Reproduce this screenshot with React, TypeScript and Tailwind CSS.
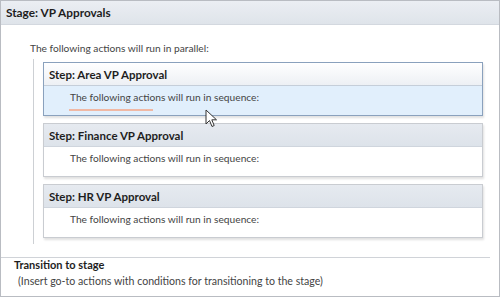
import React from 'react';

const font = { fontFamily: '"Lato", "Noto Sans", sans-serif' };

interface StepProps {
    title: string;
    selected?: boolean;
    underline?: boolean;
    children?: React.ReactNode;
}

function StepBox({ title, selected = false, underline = false, children }: StepProps) {
    return (
        <div
            className={`relative border shadow-[1px_2px_2px_rgba(0,0,0,0.12)] ${selected ? 'z-10 border-[#8aa1bd] bg-[#e1effc]' : 'border-[#c9ccd1] bg-white'}`}
        >
            <div
                className={`h-[23px] flex items-center pl-[5px] text-[11.5px] font-bold text-[#1e1e1e] border-b ${selected ? 'bg-gradient-to-b from-white to-[#edf0f4] border-[#c5ced9]' : 'bg-gradient-to-b from-[#e6eaf0] to-[#dde3ea] border-[#cfd5dd]'}`}
            >
                {title}
            </div>
            <div className="h-[29px] pl-[26px] pt-[4px] text-[10.2px] text-[#444]">
                The following actions will run in sequence:
                {underline && <div className="mt-[3px] ml-[-1px] h-[2px] w-[84px] bg-[#f0b8a4]" />}
            </div>
            {children}
        </div>
    );
}

function Cursor() {
    return (
        <svg className="absolute left-[161px] top-[46px]" width="13" height="19" viewBox="0 0 13 19">
            <path d="M1 1 L1 15 L4.5 11.5 L7 17.5 L9.2 16.5 L6.8 10.8 L11.5 10.8 Z" fill="#fff" stroke="#333" strokeWidth="1" strokeLinejoin="round" />
        </svg>
    );
}

export default function App() {
    return (
        <div className="w-[500px] h-[297px] overflow-hidden bg-white border border-[#b9bcc2] flex flex-col" style={font}>
            <div className="h-[24px] shrink-0 flex items-center pl-[5px] bg-gradient-to-b from-[#ebeef3] to-[#dfe4ea] border-b border-[#d3d8df] text-[11.8px] font-bold text-[#1e1e1e]">
                Stage: VP Approvals
            </div>
            <div className="pl-[29px] pt-[16px] text-[10.2px] text-[#444]">
                The following actions will run in parallel:
            </div>
            <div className="ml-[32px] mt-[3px] mr-[16px] pl-[9px] pt-[3px] pb-[6px] border-l border-[#cdd0d4] flex flex-col gap-[7px]">
                <StepBox title="Step: Area VP Approval" selected underline>
                    <Cursor />
                </StepBox>
                <StepBox title="Step: Finance VP Approval" />
                <StepBox title="Step: HR VP Approval" />
            </div>
            <div className="mt-[13px] mr-[9px] border-t border-[#d0d3d8] pl-[13px]">
                <div className="leading-[13px] text-[11px] font-bold text-[#1e1e1e]">Transition to stage</div>
                <div className="pl-[4px] mt-[3px] text-[10.6px] text-[#444]">
                    (Insert go-to actions with conditions for transitioning to the stage)
                </div>
            </div>
        </div>
    );
}
